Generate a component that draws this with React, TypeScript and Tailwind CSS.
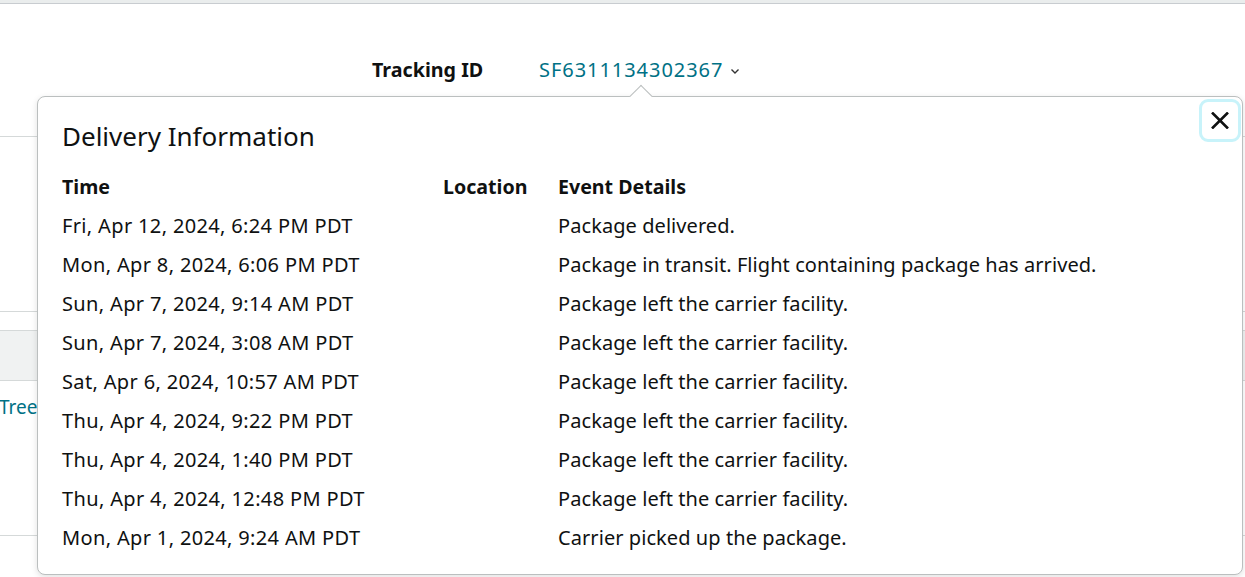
import React from "react";

const rows = [
  ["Fri, Apr 12, 2024, 6:24 PM PDT", "Package delivered."],
  ["Mon, Apr 8, 2024, 6:06 PM PDT", "Package in transit. Flight containing package has arrived."],
  ["Sun, Apr 7, 2024, 9:14 AM PDT", "Package left the carrier facility."],
  ["Sun, Apr 7, 2024, 3:08 AM PDT", "Package left the carrier facility."],
  ["Sat, Apr 6, 2024, 10:57 AM PDT", "Package left the carrier facility."],
  ["Thu, Apr 4, 2024, 9:22 PM PDT", "Package left the carrier facility."],
  ["Thu, Apr 4, 2024, 1:40 PM PDT", "Package left the carrier facility."],
  ["Thu, Apr 4, 2024, 12:48 PM PDT", "Package left the carrier facility."],
  ["Mon, Apr 1, 2024, 9:24 AM PDT", "Carrier picked up the package."],
];

export default function App() {
  return (
    <div
      className="relative w-[1245px] h-[577px] overflow-hidden bg-white text-[#0f1111]"
      style={{ fontFamily: '"Noto Sans", Arial, sans-serif' }}
    >
      {/* top bar */}
      <div className="h-[4px] bg-[#eaeded] border-b border-[#c8ccd0]" />

      {/* tracking header */}
      <div className="flex items-center h-[132px] pb-[1px]">
        <div className="flex items-center pl-[372px] mt-[1px]">
          <span className="text-[19.7px] font-bold w-[167px]">Tracking ID</span>
          <span className="text-[20px] text-[#007185] tracking-[0.95px]">SF6311134302367</span>
          <svg className="ml-[7px] mt-[2px]" width="10" height="7" viewBox="0 0 10 7">
            <path d="M1.5 1.5 L5 5 L8.5 1.5" fill="none" stroke="#333" strokeWidth="1.4" />
          </svg>
        </div>
      </div>

      {/* background content */}
      <div className="border-t border-[#d5d9d9] h-[175px]" />
      <div className="border-t border-[#d5d9d9] h-[19px]" />
      <div className="border-t border-b border-[#d5d9d9] h-[51px] bg-[#f0f2f2]" />
      <div className="h-[154px] flex items-start pt-[12px]">
        <span className="text-[19px] text-[#007185] -ml-[1px]">Tree</span>
      </div>
      <div className="border-t border-[#d5d9d9]" />

      {/* popover */}
      <div className="absolute left-[37px] top-[96px] w-[1206px] h-[479px] bg-white border border-[#bbbfbf] rounded-[8px] shadow-[0_2px_6px_rgba(0,0,0,0.12)]">
        {/* arrow */}
        <div className="absolute -top-[9px] left-[595px] w-[16px] h-[16px] bg-white border-l border-t border-[#bbbfbf] rotate-45" />
        <button className="absolute right-[1px] top-[2px] w-[42px] h-[43px] flex items-center justify-center rounded-[9px] border-[3px] border-[#c8f3fa] bg-white">
          <svg width="18" height="17" viewBox="0 0 18 17">
            <path d="M1 0.5 L17 16.5 M17 0.5 L1 16.5" stroke="#0f1111" strokeWidth="2.6" />
          </svg>
        </button>
        <div className="pl-[24px] pt-[23px]">
          <h2 className="text-[26px] leading-[32px] font-normal">Delivery Information</h2>
          <div className="mt-[21px] text-[20px]">
            <div className="flex h-[39px] items-start font-bold leading-[28px] text-[19.6px]">
              <div className="w-[381px]">Time</div>
              <div className="w-[115px]">Location</div>
              <div>Event Details</div>
            </div>
            {rows.map(([t, e], i) => (
              <div key={i} className="flex h-[39px] items-start leading-[28px]">
                <div className="w-[496px] tracking-[0.35px]">{t}</div>
                <div className="tracking-[0.07px]">{e}</div>
              </div>
            ))}
          </div>
        </div>
      </div>
    </div>
  );
}
